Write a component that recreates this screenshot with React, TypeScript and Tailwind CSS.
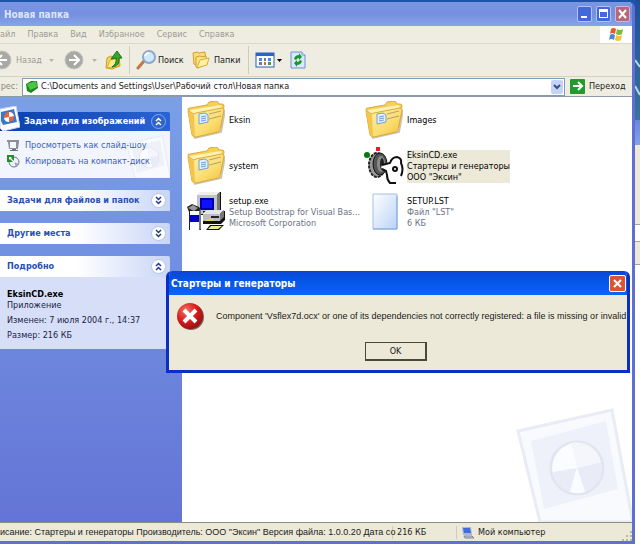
import React from 'react';

/* ---------- Icons ---------- */

function FolderIcon() {
    return (
        <svg viewBox="0 0 38 38" className="w-[38px] h-[38px]">
            <defs>
                <linearGradient id="folderFront" x1="0" y1="0" x2="1" y2="1">
                    <stop offset="0" stopColor="#fff3ae" />
                    <stop offset="0.6" stopColor="#fbdd70" />
                    <stop offset="1" stopColor="#f2bd3c" />
                </linearGradient>
            </defs>
            <path d="M7 37l27-6 4-22" fill="none" stroke="#c9c4b4" strokeWidth="2" />
            <path d="M1 8q0-1 2-1l17-3 2-3 7-1q2 0 3 3l3 0q2 0 2 2l-3 20L6 35z" fill="#f5cf5c" stroke="#dda93a" />
            <path d="M3 9l31-5 1 4-30 5z" fill="#fff1b0" />
            <path d="M1 10l6 3q1 0 2-1l26-5q2 0 2 2l-4 20q0 1-2 2L9 36q-3 0-4-2z" fill="url(#folderFront)" stroke="#dda93a" />
            <path d="M1 10l6 4 1 21q-2 0-3-1z" fill="#f3c54c" />
            <path d="M22 13l12-3M22 18l12-3" stroke="#b5a067" />
            <path d="M12 13l6-1 3 2 0 7-9 2z" fill="#e4f1fd" stroke="#6fa1db" />
            <path d="M14 16l5-1M14 18l5-1M14 20l5-1" stroke="#6f9fd8" />
        </svg>
    );
}

function SetupIcon() {
    return (
        <svg viewBox="0 0 38 40" className="w-[38px] h-10">
            <path d="M11 3l3-3h20v20l-3 3H11z" fill="#111" />
            <path d="M10 3l3-3h20l-3 3z" fill="#eee" />
            <path d="M10 3h20v19H10z" fill="#c3c3c3" />
            <path d="M30 3l3-3v19l-3 3z" fill="#777" />
            <path d="M13 6h14v12H13z" fill="#0000a8" />
            <path d="M15 8h10v8H15z" fill="#1010ff" />
            <path d="M16 19h22v9l-4 4H16z" fill="#111" />
            <path d="M16 21l4-3h17l-4 4H16z" fill="#e5e5e5" />
            <path d="M16 22h17v7H16z" fill="#bdbdbd" />
            <path d="M33 22l4-4v7l-4 4z" fill="#777" />
            <path d="M24 24h8v2h-8z" fill="#222" />
            <path d="M19 27h7v2h-7z" fill="#e4d83a" />
            <path d="M23 33h14l-5 5H19z" fill="#111" />
            <path d="M24 34h11l-4 3H21z" fill="#ecec9c" />
            <path d="M0 15l5-3 7 3 2 3v20H2V20z" fill="#222" />
            <path d="M1 16l5-3 5 3-4 3z" fill="#999" />
            <path d="M3 19h9v19H3z" fill="#fff" />
            <path d="M3 23h9v7H3z" fill="#0000d0" />
            <path d="M12 19l2-2v20l-2 1z" fill="#777" />
        </svg>
    );
}

function StarterIcon() {
    return (
        <svg viewBox="0 0 40 40" className="w-10 h-10">
            <circle cx="3" cy="9" r="3" fill="#067a0c" />
            <rect x="12" y="1" width="4" height="4" fill="#e81c24" />
            <ellipse cx="13" cy="19" rx="8" ry="12" fill="#999" stroke="#222" strokeWidth="2" strokeDasharray="3 1" />
            <ellipse cx="16" cy="18" rx="7" ry="11" fill="#555" stroke="#111" />
            <ellipse cx="17" cy="18" rx="4" ry="8" fill="#8b8b8b" />
            <ellipse cx="18" cy="18" rx="2" ry="6" fill="#222" />
            <path d="M18 19l8-2q2-6 7-6 5 1 4 6 3 6 0 13-2 5-5 7h-6q-4-3-4-9l-1-4-4-2z" fill="#fff" />
            <path d="M18 19l8-2q2-6 7-6 5 1 4 6 3 6 0 13M18 23l4 2 1 4q0 5 3 8h6" fill="none" stroke="#111" strokeWidth="2" />
            <circle cx="31" cy="23" r="3" fill="#111" />
            <circle cx="31" cy="23" r="1" fill="#fff" />
        </svg>
    );
}

function PageIcon() {
    return (
        <svg viewBox="0 0 38 38" className="w-[38px] h-[38px]">
            <defs>
                <linearGradient id="page" x1="0" y1="0" x2="1" y2="1">
                    <stop offset="0" stopColor="#fff" />
                    <stop offset="1" stopColor="#b9d3f8" />
                </linearGradient>
            </defs>
            <path d="M8 1h24v35H8z" fill="url(#page)" stroke="#a3bfe8" />
            <path d="M8 36h24V3" fill="none" stroke="#85a5d6" />
        </svg>
    );
}

function PhotoIcon() {
    return (
        <svg viewBox="0 0 20 25" className="w-5 h-[25px]">
            <path d="M0 3 16 0l4 21-17 4-3-3z" fill="#fff" stroke="#c9d5ee" />
            <path d="M1 6l13-3 3 13-14 3-2-4z" fill="#3a78c9" />
            <circle cx="9" cy="11" r="5" fill="#e8643c" />
            <path d="M9 11V6a5 5 0 0 1 5 4zM9 11v5a5 5 0 0 1-5-4z" fill="#fff" />
        </svg>
    );
}

function PhotoWatermark({ className }: { className: string }) {
    return (
        <svg viewBox="0 0 116 114" className={className}>
            <path d="M2 23 96 2l20 108v4H24z" fill="#f9fafe" stroke="#e9ebf5" strokeWidth="3" />
            <path d="M15 33 90 13l12 68-74 20z" fill="#eff1fa" />
            <circle cx="61" cy="60" r="26" fill="#fbfcff" stroke="#e2e5f1" strokeWidth="3" />
            <path d="M61 60l24-6a25 25 0 0 1-16 30z" fill="#e9ecf7" />
            <path d="M61 60l-24 6a25 25 0 0 1 9-26l9-5z" fill="#fbfcff" />
            <path d="M61 60l-24 4a25 25 0 0 0 17 20z" fill="#e9ecf7" />
            <path d="M61 60l-6-25a25 25 0 0 1 30 19z" fill="#f5f6fc" />
            <path d="M61 60l8 24a25 25 0 0 1-15 0z" fill="#fbfcff" />
        </svg>
    );
}

function ArrowCircleIcon({ left = false }: { left?: boolean }) {
    return (
        <svg viewBox="0 0 20 20" className="w-5 h-5 shrink-0">
            <circle cx="10" cy="10" r="9" fill="#a8a8a5" stroke="#c4c4c0" />
            <path
                d={left ? 'M15 10H6M10 5l-5 5 5 5' : 'M5 10h9M10 5l5 5-5 5'}
                fill="none" stroke="#fff" strokeWidth="2"
            />
        </svg>
    );
}

function UpFolderIcon() {
    return (
        <svg viewBox="0 0 18 20" className="w-[18px] h-5 shrink-0">
            <path d="M2 8l4-2 2 1 6-1 1 10-8 3-6-1z" fill="#f7d75e" stroke="#c99b26" />
            <path d="M2 18l3-8 10-2-2 8z" fill="#fdeb8f" stroke="#d9ad35" />
            <path d="M7 17q5-3 4-9l-5 1 6-8 5 7-3 0q1 8-7 9z" fill="#38a52c" stroke="#187216" />
        </svg>
    );
}

function SearchIcon() {
    return (
        <svg viewBox="0 0 20 20" className="w-5 h-5 shrink-0">
            <path d="M2 18l6-7" stroke="#bf7848" strokeWidth="3" strokeLinecap="round" />
            <circle cx="13" cy="7" r="6" fill="#cfe9fb" stroke="#8aa7cc" strokeWidth="2" />
            <path d="M9 6q1-3 4-3" fill="none" stroke="#fff" strokeWidth="2" />
        </svg>
    );
}

function FoldersIcon() {
    return (
        <svg viewBox="0 0 18 18" className="w-[18px] h-[18px] shrink-0">
            <path d="M1 2l4-1 2 1 6-1 1 9-10 4-2-1z" fill="#f9dc72" stroke="#cfa031" />
            <path d="M4 6l4-1 2 1 4-1 1 8-9 4-2-1z" fill="#fbe58a" stroke="#cfa031" />
            <path d="M5 17l3-8 9-2-2 7z" fill="#fff0a3" stroke="#d9ad35" />
        </svg>
    );
}

function ViewsIcon() {
    return (
        <svg viewBox="0 0 20 16" className="w-5 h-4 shrink-0">
            <rect x="1" y="1" width="18" height="14" fill="#fff" stroke="#2a5bb5" />
            <path d="M1 1h18v3H1z" fill="#2a63cf" />
            <path d="M4 6h3v3H4zM13 6h3v3h-3z" fill="#4a8ade" />
            <path d="M9 6h2v3H9z" fill="#777" />
            <path d="M4 10h3v3H4z" fill="#5a7fb5" />
            <path d="M9 10h2v3H9z" fill="#d6653c" />
            <path d="M13 10h3v3h-3z" fill="#3da13a" />
        </svg>
    );
}

function RefreshIcon() {
    return (
        <svg viewBox="0 0 16 18" className="w-4 h-[18px] shrink-0">
            <path d="M1 1h11l3 3v13H1z" fill="#d9e9fd" stroke="#6a92cf" />
            <path d="M12 1v3h3" fill="#fff" stroke="#6a92cf" />
            <path d="M4 8q1-4 5-4l0-2 3 4-3 3V7Q7 7 6 9z" fill="#1f962a" />
            <path d="M12 10q-1 4-5 4v2l-3-4 3-3v2q2 0 3-2z" fill="#1f962a" />
        </svg>
    );
}

function FlagIcon() {
    return (
        <svg viewBox="0 0 16 15" className="w-4 h-[15px]">
            <path d="M3 2q3-2 5 0L7 7Q4 5 2 7z" fill="#e8582b" />
            <path d="M9 2q3 2 6 0l-1 5q-3 2-6 0z" fill="#7dba35" />
            <path d="M2 8q2-2 5 0l-1 5q-3-2-5 0z" fill="#4a86dc" />
            <path d="M8 8q3 2 6 0l-1 5q-3 2-6 0z" fill="#f5c430" />
        </svg>
    );
}

function GreenFolderIcon() {
    return (
        <svg viewBox="0 0 13 13" className="w-[13px] h-[13px] shrink-0">
            <path d="M1 4l5-3 6 0 1 7-7 5-4-2z" fill="#188a1c" />
            <path d="M2 4l9-3 1 6-7 3z" fill="#4fc348" />
        </svg>
    );
}

function GoIcon() {
    return (
        <svg viewBox="0 0 15 15" className="w-[15px] h-[15px] shrink-0">
            <rect width="15" height="15" rx="1" fill="#249a2c" />
            <path d="M3 7h8M8 3l4 4-4 4" fill="none" stroke="#fff" strokeWidth="2" />
        </svg>
    );
}

function SlideshowIcon() {
    return (
        <svg viewBox="0 0 13 13" className="w-[13px] h-[13px] shrink-0">
            <path d="M0 1h12v2l-1 7H2L1 3H0z" fill="#8b909c" />
            <path d="M3 3h6v6H3z" fill="#f4f7ff" />
            <path d="M5 10h4v1H5zM3 11h8v1H3z" fill="#6d7280" />
        </svg>
    );
}

function CopyDiscIcon() {
    return (
        <svg viewBox="0 0 13 13" className="w-[13px] h-[13px] shrink-0">
            <circle cx="7" cy="7" r="5" fill="#eef1f6" stroke="#6f7686" />
            <path d="M7 7l5 2a5 5 0 0 1-3 3z" fill="#9ea5b5" />
            <path d="M0 0h7v7H0z" fill="#1f9028" />
            <path d="M2 2h3L4 3l4 4-1 1-4-4-1 1z" fill="#fff" />
        </svg>
    );
}

function ComputerIcon() {
    return (
        <svg viewBox="0 0 13 13" className="w-[13px] h-[13px] shrink-0">
            <path d="M1 1l9 0 1 8H2z" fill="#a9b6d8" />
            <path d="M2 2h7l1 5H3z" fill="#3f6ce0" />
            <path d="M3 10h8l2 2H4z" fill="#c2c8d8" stroke="#7d879f" />
        </svg>
    );
}

function Chevrons({ up, dark }: { up: boolean; dark: boolean }) {
    return (
        <svg viewBox="0 0 15 15" className="w-[15px] h-[15px]">
            <circle cx="7.5" cy="7.5" r="7" fill={dark ? '#2d62d0' : '#fff'} stroke={dark ? '#86a8ea' : '#b8c3e0'} />
            <path
                d={up ? 'M5 7l2.500-2.500L10 7M5 11l2.500-2.500L10 11' : 'M5 4l2.500 2.500L10 4M5 8l2.500 2.500L10 8'}
                fill="none" stroke={dark ? '#fff' : '#1e3a92'} strokeWidth="1.500"
            />
        </svg>
    );
}

function ErrorIcon() {
    return (
        <svg viewBox="0 0 27 27" className="w-[27px] h-[27px] shrink-0">
            <defs>
                <radialGradient id="err" cx="0.35" cy="0.3" r="0.8">
                    <stop offset="0" stopColor="#f2756a" />
                    <stop offset="0.5" stopColor="#d81e1e" />
                    <stop offset="1" stopColor="#8e0b10" />
                </radialGradient>
            </defs>
            <circle cx="14" cy="14" r="13" fill="#7c6262" />
            <circle cx="13" cy="13" r="13" fill="url(#err)" />
            <path d="M7 7l12 12M19 7L7 19" stroke="#fff" strokeWidth="4" />
        </svg>
    );
}

/* ---------- Sidebar ---------- */

type PanelProps = {
    title: string;
    open?: boolean;
    primary?: boolean;
    children?: React.ReactNode;
};

function Panel({ title, open = false, primary = false, children }: PanelProps) {
    return (
        <section>
            <header
                className={
                    primary
                        ? 'relative flex items-center justify-between h-[19px] pl-6 pr-1 rounded-tr-xs bg-linear-to-r from-[#0a3fae] to-[#2a63d4] text-white'
                        : 'relative flex items-center justify-between h-[21px] pl-[7px] pr-1 rounded-tr-xs bg-linear-to-r from-white from-45% to-[#c8d5f7] text-[#2850b4]'
                }
            >
                {primary && <span className="absolute left-0 bottom-0"><PhotoIcon /></span>}
                <h2 className="font-bold whitespace-nowrap">{title}</h2>
                <button aria-label={open ? 'Свернуть' : 'Развернуть'} className="shrink-0">
                    <Chevrons up={open} dark={primary} />
                </button>
            </header>
            {children}
        </section>
    );
}

function Sidebar() {
    return (
        <aside className="w-[182px] shrink-0 flex flex-col gap-3 pt-[15px] pr-3 bg-linear-to-b from-[#7ba0e6] to-[#6474d6]">
            <Panel title="Задачи для изображений" open primary>
                <div className="relative flex flex-col gap-[3px] h-[47px] pl-[7px] pt-2 bg-[#f2f5fe] text-[#3a62c4]">
                    <PhotoWatermark className="absolute right-0 bottom-0 w-11 h-[43px]" />
                    <a href="#" className="relative flex items-center gap-[5px]">
                        <SlideshowIcon />
                        Просмотреть как слайд-шоу
                    </a>
                    <a href="#" className="relative flex items-center gap-[5px]">
                        <CopyDiscIcon />
                        Копировать на компакт-диск
                    </a>
                </div>
            </Panel>
            <Panel title="Задачи для файлов и папок" />
            <Panel title="Другие места" />
            <Panel title="Подробно" open>
                <div className="h-[72px] pl-[7px] pt-3 bg-[#d6dff7] text-[#222244] leading-[11px]">
                    <p className="font-bold text-black">EksinCD.exe</p>
                    <p>Приложение</p>
                    <p className="mt-1">Изменен: 7 июля 2004 г., 14:37</p>
                    <p className="mt-1">Размер: 216 КБ</p>
                </div>
            </Panel>
        </aside>
    );
}

/* ---------- Files ---------- */

const files = [
    { name: 'Eksin', icon: <FolderIcon /> },
    { name: 'Images', icon: <FolderIcon /> },
    { name: 'system', icon: <FolderIcon /> },
    { name: 'EksinCD.exe', lines: ['Стартеры и генераторы', 'ООО "Эксин"'], icon: <StarterIcon />, selected: true },
    { name: 'setup.exe', lines: ['Setup Bootstrap for Visual Bas...', 'Microsoft Corporation'], icon: <SetupIcon /> },
    { name: 'SETUP.LST', lines: ['Файл "LST"', '6 КБ'], icon: <PageIcon /> },
];

function FileList() {
    return (
        <main className="relative flex-1 bg-white">
            <PhotoWatermark className="absolute right-0 bottom-0 w-[116px] h-[114px]" />
            <ul className="grid grid-cols-[178px_178px] auto-rows-[46px] pl-1">
                {files.map(file => (
                    <li key={file.name} className="flex items-center gap-[3px]">
                        <span className="w-10 shrink-0 flex justify-center">{file.icon}</span>
                        <div
                            className={
                                file.selected
                                    ? 'bg-[#ece9d8] text-black leading-[11px] whitespace-nowrap'
                                    : 'text-gray-500 leading-[11px] whitespace-nowrap'
                            }
                        >
                            <p className="text-black">{file.name}</p>
                            {file.lines?.map(line => <p key={line}>{line}</p>)}
                        </div>
                    </li>
                ))}
            </ul>
        </main>
    );
}

/* ---------- Window chrome ---------- */

function TitleBar() {
    return (
        <header className="flex items-center justify-between h-6 pl-1 pr-0.5 bg-linear-to-b from-[#7b96e2] via-[#7590df] to-[#86a5ea]">
            <h1 className="text-[10px] font-bold text-[#dde6fb]">Новая папка</h1>
            <div className="flex gap-1">
                <button aria-label="Свернуть" className="w-[15px] h-4 rounded-xs border border-[#b3c4f2] bg-[#4268dc]">
                    <svg viewBox="0 0 13 14" className="w-full h-full"><path d="M3 9h6v2H3z" fill="#fff" /></svg>
                </button>
                <button aria-label="Развернуть" className="w-[15px] h-4 rounded-xs border border-[#b3c4f2] bg-[#4268dc]">
                    <svg viewBox="0 0 13 14" className="w-full h-full"><path d="M2 2h9v9H2zM3 5v5h7V5z" fill="#fff" fillRule="evenodd" /></svg>
                </button>
                <button aria-label="Закрыть" className="w-[15px] h-4 rounded-xs border border-[#c9b7dc] bg-[#b9657a]">
                    <svg viewBox="0 0 13 14" className="w-full h-full"><path d="M3 3l7 8M10 3l-7 8" stroke="#fff" strokeWidth="2" /></svg>
                </button>
            </div>
        </header>
    );
}

function MenuBar() {
    return (
        <nav className="flex items-center justify-between h-[18px] border-b border-[#dcd9c8] text-[#9d9b92]">
            <div className="flex gap-3">
                <button>айл</button>
                <button>Правка</button>
                <button>Вид</button>
                <button>Избранное</button>
                <button>Сервис</button>
                <button>Справка</button>
            </div>
            <span className="flex items-center justify-center w-8 h-[17px] bg-white"><FlagIcon /></span>
        </nav>
    );
}

function SmallArrow({ color }: { color: string }) {
    return (
        <svg viewBox="0 0 5 3" className="w-[5px] h-[3px] shrink-0">
            <path d="M0 0h5L2.500 3z" fill={color} />
        </svg>
    );
}

function Toolbar() {
    return (
        <div className="flex items-center h-[33px] border-b border-[#d5d2c0]">
            <button className="flex items-center w-[49px] text-[#9d9b92]">
                <span className="w-3 mr-1 flex justify-end overflow-hidden"><ArrowCircleIcon left /></span>
                Назад
            </button>
            <SmallArrow color="#b5b3a8" />
            <button aria-label="Вперед" className="ml-2.5 mr-2"><ArrowCircleIcon /></button>
            <SmallArrow color="#b5b3a8" />
            <button aria-label="Вверх" className="ml-2"><UpFolderIcon /></button>
            <span className="w-px h-7 mx-1.5 bg-[#cfccba]" />
            <button className="flex items-center gap-0.5 w-14">
                <SearchIcon />
                Поиск
            </button>
            <button className="flex items-center gap-1 w-14">
                <FoldersIcon />
                Папки
            </button>
            <span className="w-px h-7 mr-1.5 bg-[#cfccba]" />
            <button aria-label="Вид" className="flex items-center gap-0.5">
                <ViewsIcon />
                <SmallArrow color="#000" />
            </button>
            <button aria-label="Обновить" className="ml-2"><RefreshIcon /></button>
        </div>
    );
}

function AddressBar() {
    return (
        <div className="flex items-center h-5 border-b border-[#8e9aa8]">
            <label htmlFor="address" className="w-[22px] pr-1 text-right text-[#8a887e]">рес:</label>
            <div className="flex flex-1 items-center h-[18px] pl-0.5 pr-px gap-[3px] bg-white border border-[#7f9db9]">
                <GreenFolderIcon />
                <input
                    id="address"
                    className="flex-1 min-w-0 outline-none"
                    defaultValue="C:\Documents and Settings\User\Рабочий стол\Новая папка"
                />
                <button aria-label="Список адресов" className="flex items-center justify-center w-3 h-[14px] rounded-xs bg-[#c3d3fb]">
                    <svg viewBox="0 0 8 6" className="w-2 h-1.5"><path d="M1 1l3 3 3-3" fill="none" stroke="#3b4f7a" strokeWidth="2" /></svg>
                </button>
            </div>
            <button className="flex items-center gap-1 w-[67px] pl-[5px]">
                <GoIcon />
                Переход
            </button>
        </div>
    );
}

function StatusBar() {
    return (
        <footer className="flex items-center h-[19px] border-t border-[#8e8c80] bg-[#ece9d8] whitespace-nowrap">
            <span className="w-[393px] shrink-0 border-r border-[#cfccba] font-['Liberation_Sans',sans-serif]">
                исание: Стартеры и генераторы Производитель: ООО "Эксин" Версия файла: 1.0.0.20 Дата со
            </span>
            <span className="w-16 pl-1 border-r border-[#cfccba]">216 КБ</span>
            <span className="flex-1 flex items-center gap-1 pl-1">
                <ComputerIcon />
                Мой компьютер
            </span>
            <svg viewBox="0 0 10 10" className="w-2.5 h-2.5 self-end">
                <path d="M8 0h2v2H8zM8 4h2v2H8zM8 8h2v2H8zM4 4h2v2H4zM4 8h2v2H4zM0 8h2v2H0z" fill="#b9b6a3" />
            </svg>
        </footer>
    );
}

/* Strip of the desktop and of a second window on the right edge */
function Background() {
    return (
        <div className="w-[5px] flex flex-col bg-white">
            <div className="h-[120px] bg-linear-to-b from-[#1f4f9c] to-[#3a7499]">
                <svg viewBox="0 0 5 120" className="w-[5px] h-[120px]">
                    <path d="M0 60l5 7M0 86l5 9" stroke="#b9d8e0" strokeWidth="2" />
                </svg>
            </div>
            <div className="h-[25px] bg-linear-to-b from-[#6a86dc] to-[#84a2ea]" />
            <div className="h-20 bg-[#ece9d8] border-b border-[#a5a396]" />
            <div className="h-4 bg-white" />
            <div className="h-6 bg-[#ece9d8] border-y border-[#a5a396]" />
        </div>
    );
}

function ErrorDialog() {
    return (
        <div
            role="alertdialog"
            aria-labelledby="dialog-title"
            className="absolute top-[271px] left-[166px] right-[10px] rounded-t-md border-x-3 border-b-3 border-[#0a2fc4] bg-[#ece9d8] overflow-hidden"
        >
            <header className="flex items-center justify-between h-6 pl-0.5 pr-px bg-linear-to-b from-[#0a46d8] via-[#0558e8] to-[#0a66fa]">
                <h2 id="dialog-title" className="text-[10px] font-bold text-white">Стартеры и генераторы</h2>
                <button aria-label="Закрыть" className="w-[17px] h-[17px] rounded-xs border border-white bg-[#dd5433]">
                    <svg viewBox="0 0 15 15" className="w-full h-full"><path d="M4 4l7 7M11 4l-7 7" stroke="#fff" strokeWidth="2" /></svg>
                </button>
            </header>
            <div className="flex items-center gap-3 pl-2 pt-2">
                <ErrorIcon />
                <p className="font-['Liberation_Sans',sans-serif] whitespace-nowrap">
                    Component 'Vsflex7d.ocx' or one of its dependencies not correctly registered: a file is missing or invalid
                </p>
            </div>
            <div className="flex justify-center pt-3 pr-1 pb-[9px]">
                <button className="w-[62px] h-[19px] border border-r-2 border-b-2 border-[#4a4838] bg-[#ece9d8]">OK</button>
            </div>
        </div>
    );
}

function App() {
    return (
        <div className="relative min-h-screen flex pb-[3px] bg-white overflow-hidden font-['DejaVu_Sans_Condensed','DejaVu_Sans',sans-serif] text-[9px] leading-[13px] text-[#1a1a1a]">
            <div className="flex-1 min-w-0 flex flex-col border-t-2 border-[#1c55a8] bg-[#1c55a8]">
                <div className="flex-1 flex flex-col rounded-tr-md overflow-hidden border-r-3 border-b-3 border-[#5f70d2] bg-[#efede2]">
                    <TitleBar />
                    <MenuBar />
                    <Toolbar />
                    <AddressBar />
                    <div className="flex-1 flex">
                        <Sidebar />
                        <FileList />
                    </div>
                    <StatusBar />
                </div>
            </div>
            <Background />
            <ErrorDialog />
        </div>
    );
}

export default App;
